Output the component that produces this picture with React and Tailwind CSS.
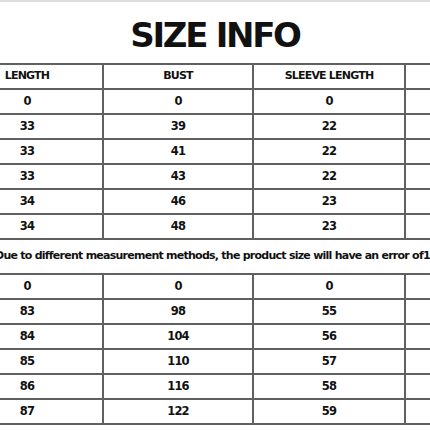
const head = ['LENGTH', 'BUST', 'SLEEVE LENGTH', '']

const topRows = [
  ['0', '0', '0', ''],
  ['33', '39', '22', ''],
  ['33', '41', '22', ''],
  ['33', '43', '22', ''],
  ['34', '46', '23', ''],
  ['34', '48', '23', ''],
]

const bottomRows = [
  ['0', '0', '0', ''],
  ['83', '98', '55', ''],
  ['84', '104', '56', ''],
  ['85', '110', '57', ''],
  ['86', '116', '58', ''],
  ['87', '122', '59', ''],
]

const colWidths = ['w-[150px]', 'w-[150px]', 'w-[152px]', 'w-[150px]']

function Row({ cells, header = false }) {
  return (
    <div className="flex h-[25px] border-t-2 border-[#606060]">
      {cells.map((c, i) => (
        <div
          key={i}
          className={`${colWidths[i]} shrink-0 flex items-center justify-center ${i > 0 ? 'border-l-2 border-[#606060]' : ''} ${
            header ? 'text-[11px] tracking-[-0.8px]' : 'text-[11.5px] tracking-[-0.8px]'
          }`}
        >
          {c}
        </div>
      ))}
    </div>
  )
}

export default function App() {
  return (
    <div
      className="w-[430px] h-[430px] overflow-hidden bg-white text-[#111] font-bold border-t-2 border-[#dedede]"
      style={{ fontFamily: '"DejaVu Sans", Verdana, sans-serif' }}
    >
      {/* Title */}
      <div className="h-[61px] flex items-center justify-center pt-[4px]">
        <h1 className="text-[34px] leading-none tracking-[-2.3px]">SIZE INFO</h1>
      </div>

      {/* Table */}
      <div className="ml-[-48px] w-[602px]">
        <Row cells={head} header />
        {topRows.map((r, i) => (
          <Row key={i} cells={r} />
        ))}
        <div className="h-[35px] border-t-2 border-[#606060] flex items-center pl-[43px] whitespace-nowrap text-[11px] tracking-[-0.75px]">
          Due to different measurement methods, the product size will have an error of1-3cm
        </div>
        {bottomRows.map((r, i) => (
          <Row key={i} cells={r} />
        ))}
        <div className="border-t-2 border-[#606060]" />
      </div>
    </div>
  )
}
